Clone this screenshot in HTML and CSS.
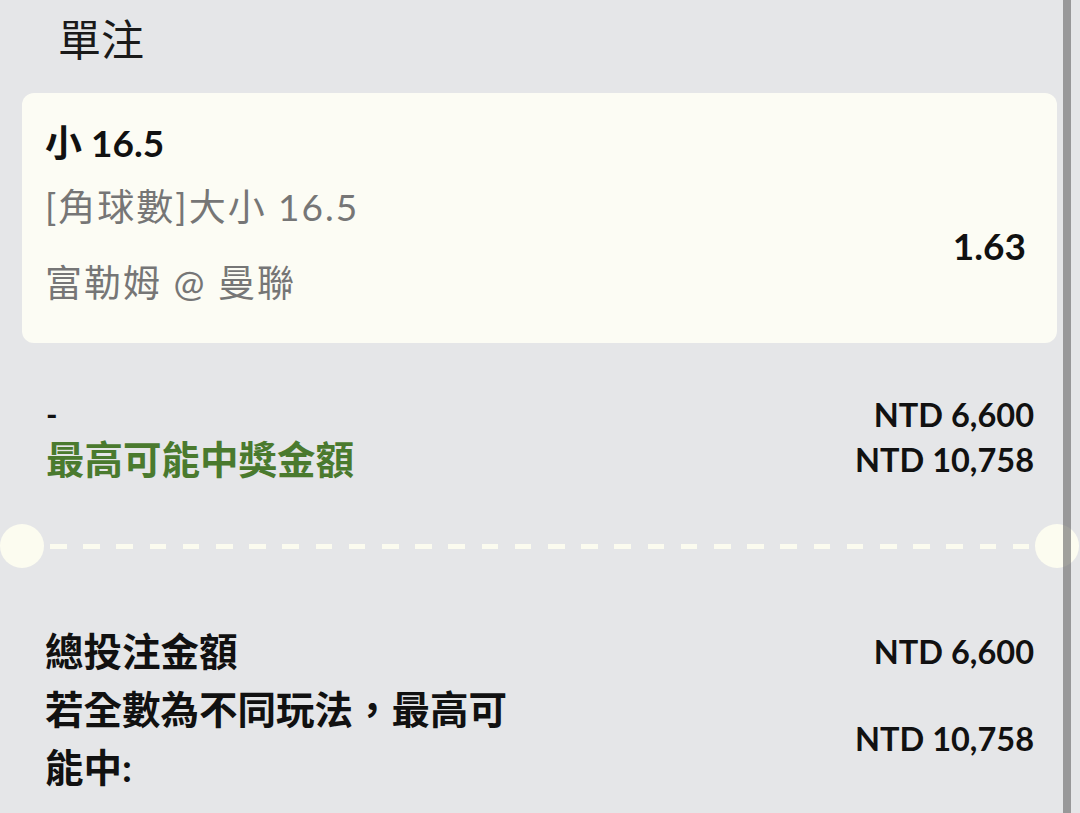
FILE: index.html
```html
<!DOCTYPE html>
<html lang="zh-Hant">
<head>
    <meta charset="UTF-8">
    <meta name="viewport" content="width=device-width, initial-scale=1.0">
    <title>單注</title>
    <link rel="stylesheet" href="styles.css">
</head>
<body>
    <h1 class="title">單注</h1>

    <main class="slip">
        <section class="bet-card">
            <div class="bet-info">
                <div class="bet-name">小 16.5</div>
                <div class="bet-market">[角球數]大小 16.5</div>
                <div class="bet-match">富勒姆 @ 曼聯</div>
            </div>
            <div class="bet-odds">1.63</div>
        </section>

        <section class="stake">
            <div class="row">
                <span class="stake-input">-</span>
                <span class="amount">NTD 6,600</span>
            </div>
            <div class="row">
                <span class="label label-win">最高可能中獎金額</span>
                <span class="amount">NTD 10,758</span>
            </div>
        </section>

        <div class="divider">
            <span class="notch"></span>
            <span class="dashes"></span>
            <span class="notch"></span>
        </div>

        <section class="summary">
            <div class="row">
                <span class="label">總投注金額</span>
                <span class="amount">NTD 6,600</span>
            </div>
            <div class="row">
                <span class="label label-wrap">若全數為不同玩法，最高可能中:</span>
                <span class="amount">NTD 10,758</span>
            </div>
        </section>
    </main>

    <div class="scroll-bar"></div>
</body>
</html>
```

FILE: styles.css
```css
body {
    margin: 0;
    padding: 0;
    background-color: #e5e6e8;
    color: #111;
    font-family: "Lato", "Noto Sans CJK TC", sans-serif;
    overflow: hidden;
}
.title {
    margin: 0;
    padding-left: 58px;
    font-size: 43px;
    font-weight: 400;
    line-height: 80px;
    color: #1a1a1a;
}
.slip {
    margin: 13px 23px 0 22px;
}
.bet-card {
    display: flex;
    justify-content: space-between;
    align-items: flex-start;
    padding: 26px 31px 22px 23px;
    background: #fcfcf4;
    border-radius: 12px;
}
.bet-name {
    font-size: 37px;
    font-weight: 700;
    line-height: 48px;
    margin-bottom: 2px;
}
.bet-market,
.bet-match {
    font-size: 37px;
    letter-spacing: 2px;
    line-height: 76px;
    color: #767676;
}
.bet-odds {
    margin-top: 103px;
    font-size: 37px;
    font-weight: 700;
    line-height: 48px;
}
.stake {
    margin-top: 49px;
    padding: 0 23px 0 24px;
}
.row {
    display: flex;
    justify-content: space-between;
    align-items: center;
}
.stake .row {
    line-height: 45px;
}
.stake-input {
    font-size: 31px;
    font-weight: 700;
}
.label {
    font-size: 38.5px;
    font-weight: 700;
}
.label-win {
    color: #4a7a2e;
}
.label-wrap {
    width: 480px;
}
.amount {
    font-size: 32.5px;
    font-weight: 700;
    line-height: 45px;
}
.divider {
    display: flex;
    align-items: center;
    margin: 42px -22px 0;
}
.notch {
    width: 44px;
    height: 44px;
    border-radius: 50%;
    background: #fcfcf0;
    flex-shrink: 0;
}
.dashes {
    flex: 1;
    height: 5px;
    margin: 0 6px;
    background: repeating-linear-gradient(to right, #fbfbef 0 16.6px, transparent 16.6px 33.2px);
}
.summary {
    margin-top: 54px;
    padding: 0 23px 0 23px;
    line-height: 58px;
}
.scroll-bar {
    position: fixed;
    top: 0;
    bottom: 0;
    left: 1063px;
    width: 8px;
    background: rgba(110, 110, 110, 0.65);
}
```
